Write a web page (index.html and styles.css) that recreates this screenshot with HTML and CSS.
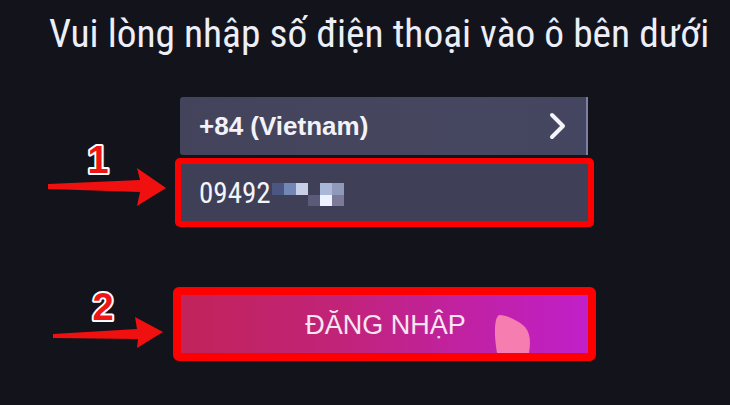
FILE: index.html
```html
<!DOCTYPE html>
<html lang="vi">
<head>
<meta charset="utf-8">
<title>Đăng nhập</title>
<link rel="stylesheet" href="styles.css">
</head>
<body>
<div class="page">
  <h1 class="title">Vui lòng nhập số điện thoại vào ô bên dưới</h1>
  <div class="form">
    <div class="country">
      <span class="country-text">+84 (Vietnam)</span>
      <svg class="chevron" width="18" height="28" viewBox="0 0 18 28"><path d="M3 3 L14 14 L3 25" fill="none" stroke="#f4f4fa" stroke-width="4" stroke-linecap="round" stroke-linejoin="round"/></svg>
    </div>
    <div class="phone">
      <span class="phone-text">09492</span>
      <span class="pixels">
        <i class="px c1"></i><i class="px c2"></i><i class="px c3"></i><i class="px c0"></i><i class="px c4"></i><i class="px c5"></i>
        <i class="px c0"></i><i class="px c0"></i><i class="px c0"></i><i class="px c6"></i><i class="px c7"></i><i class="px c8"></i>
      </span>
    </div>
    <div class="login">
      <span class="login-text">ĐĂNG NHẬP</span>
      <svg class="pointer" width="36" height="38" viewBox="0 0 36 38"><path d="M5 0 C12 0 24 6 30 12 C35 18 36 26 34 38 L2 38 C0 26 -1 14 1 5 C2 2 3 0 5 0 Z" fill="#f57db0"/></svg>
    </div>
  </div>

  <svg class="num num1" width="30" height="40" viewBox="0 0 30 40"><text x="15" y="33" text-anchor="middle" class="num-text">1</text></svg>
  <svg class="num num2" width="34" height="40" viewBox="0 0 34 40"><text x="17" y="33" text-anchor="middle" class="num-text">2</text></svg>
  <svg class="arrow arrow1" width="120" height="40" viewBox="0 0 120 40"><path d="M0 17 L92 13 L89 1 L118 21 L89 39 L92 25 L0 22 Z" fill="#f01010"/></svg>
  <svg class="arrow arrow2" width="112" height="34" viewBox="0 0 112 34"><path d="M0 17 L84 12 L82 0 L110 15 L84 31 L85 22 L0 21 Z" fill="#f01010"/></svg>
</div>
</body>
</html>
```

FILE: styles.css
```css
html, body {
  margin: 0;
  padding: 0;
  background: #12121a;
}
.page {
  position: relative;
  width: 730px;
  height: 405px;
  overflow: hidden;
  background: #13131b;
  font-family: "Roboto Condensed", "Liberation Sans", sans-serif;
  color: #eef0f8;
}
.title {
  margin: 0;
  padding: 12px 0 0 49px;
  font-family: "Roboto Condensed", "Liberation Sans", sans-serif;
  font-weight: normal;
  font-size: 39.4px;
  line-height: 44px;
  white-space: nowrap;
  color: #eceef8;
}
.form {
  display: flex;
  flex-direction: column;
  align-items: flex-start;
  margin-left: 173px;
  margin-top: 41px;
  width: 423px;
}
.country {
  display: flex;
  align-items: center;
  justify-content: space-between;
  box-sizing: border-box;
  margin-left: 7px;
  width: 408px;
  height: 58px;
  padding: 0 19px 0 19px;
  background: linear-gradient(90deg, #43445c, #46475f 60%, #444560);
  border-right: 2px solid #7d80a0;
  border-radius: 3px 0 0 3px;
}
.country-text {
  font-family: "Liberation Sans", sans-serif;
  font-weight: bold;
  font-size: 26px;
  color: #f2f2f8;
}
.phone {
  display: flex;
  align-items: center;
  box-sizing: border-box;
  margin-top: 3px;
  margin-left: 2px;
  width: 419px;
  height: 69px;
  padding: 0 0 0 18px;
  border: 6px solid #ff0000;
  border-radius: 5px;
  background: #3f4058;
}
.phone-text {
  font-family: "Roboto Condensed", "Liberation Sans", sans-serif;
  font-size: 29px;
  color: #f4f4fa;
}
.pixels {
  display: grid;
  grid-template-columns: repeat(6, 12px);
  grid-template-rows: 12px 11px;
  margin-left: 1px;
  margin-top: 4px;
}
.px { display: block; }
.c0 { background: transparent; }
.c1 { background: #4b5682; }
.c2 { background: #7287b6; }
.c3 { background: #c8d0e8; }
.c4 { background: #a9b8d9; }
.c5 { background: #9199b8; }
.c6 { background: #5b5b79; }
.c7 { background: #eef2ff; }
.c8 { background: #7b7b99; }
.login {
  position: relative;
  display: flex;
  align-items: center;
  justify-content: center;
  box-sizing: border-box;
  margin-top: 60px;
  width: 423px;
  height: 74px;
  border: 8px solid #ff0000;
  border-radius: 6px;
  background: linear-gradient(90deg, #c2235a 0%, #c1237a 40%, #c021b0 80%, #c020c8 100%);
}
.login-text {
  font-family: "Liberation Sans", sans-serif;
  font-size: 27px;
  font-weight: normal;
  color: #f6e6f2;
  margin-left: 2px;
  margin-top: 2px;
}
.pointer {
  position: absolute;
  left: 314px;
  bottom: 0;
}
.num {
  position: absolute;
}
.num-text {
  font-family: "Liberation Sans", sans-serif;
  font-weight: bold;
  font-size: 38px;
  fill: #f01414;
  stroke: #ffffff;
  stroke-width: 4px;
  stroke-linejoin: round;
  paint-order: stroke fill;
}
.num1 { left: 83px; top: 140px; }
.num2 { left: 86px; top: 287px; }
.arrow { position: absolute; }
.arrow1 { left: 48px; top: 167px; }
.arrow2 { left: 53px; top: 317px; }
```
